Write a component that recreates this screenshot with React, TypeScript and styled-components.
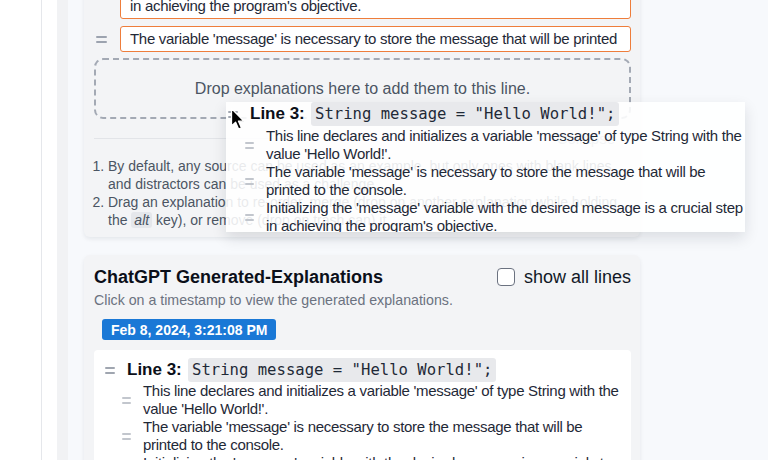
import * as React from 'react';
import styled, { createGlobalStyle } from 'styled-components';

const GlobalStyle = createGlobalStyle`
    html, body {
        margin: 0;
        padding: 0;
    }
    body {
        font-family: "Liberation Sans", Arial, sans-serif;
        color: #111827;
        background: #ffffff;
    }
`;

const Page = styled.div`
    display: flex;
    height: 460px;
    overflow: hidden;
    background: #ffffff;
`;

const Sidebar = styled.div`
    width: 41px;
    flex-shrink: 0;
    border-right: 1px solid #e5e7eb;
`;

const Gutter = styled.div`
    width: 15px;
    flex-shrink: 0;
`;

const Strip = styled.div`
    width: 11px;
    flex-shrink: 0;
    background: #f1f2f4;
`;

const Main = styled.div`
    position: relative;
    flex: 1;
    background: #f7f9fc;
    padding: 0 16px;
`;

const Column = styled.div<{ $offset: number }>`
    width: 556px;
    display: flex;
    flex-direction: column;
    gap: 18px;
    margin-top: ${p => -p.$offset}px;
`;

const Card = styled.section`
    background: #f3f4f6;
    border-radius: 6px;
    box-shadow: 0 2px 4px rgba(15, 23, 42, 0.08);
    padding: 10px 9px 8px 10px;
`;

const ExplRow = styled.div`
    display: flex;
    align-items: center;
    margin-bottom: 7px;
`;

const HandleBox = styled.span<{ $w: number; $color: string }>`
    display: inline-flex;
    flex-direction: column;
    justify-content: center;
    gap: 3px;
    width: ${p => p.$w}px;
    flex-shrink: 0;
    & > i {
        display: block;
        height: 2px;
        background: ${p => p.$color};
        border-radius: 1px;
    }
`;

const HandleSlot = styled.div<{ $w: number }>`
    width: ${p => p.$w}px;
    flex-shrink: 0;
    display: flex;
    padding-left: 2px;
    box-sizing: border-box;
`;

const Spacer = styled.span<{ $w: number }>`
    width: ${p => p.$w}px;
    flex-shrink: 0;
`;

const OrangeBox = styled.div`
    flex: 1;
    border: 1.5px solid #ee7d3b;
    border-radius: 3px;
    background: #ffffff;
    padding: 3px 9px;
    font-size: 15px;
    letter-spacing: -0.3px;
    line-height: 18px;
    color: #1f2937;
`;

const DropZone = styled.div`
    height: 61px;
    border: 2px dashed #a3a9b4;
    border-radius: 9px;
    display: flex;
    align-items: center;
    justify-content: center;
    font-size: 16px;
    color: #4b5563;
    box-sizing: border-box;
    margin-top: -1px;
`;

const DividerRow = styled.div`
    display: flex;
    align-items: center;
    gap: 12px;
    margin-top: 17px;
    height: 4px;
`;

const Rule = styled.div`
    flex: 1;
    height: 1px;
    background: #e2e4e8;
`;

const Collapse = styled.span`
    font-size: 15px;
    color: #9ca3af;
    padding-right: 16px;
`;

const Notes = styled.ol`
    margin: 17px 0 0 0;
    padding-left: 14px;
    font-size: 14px;
    line-height: 18px;
    color: #4b5563;
`;

const Kbd = styled.span`
    font-style: italic;
    background: #e5e7eb;
    border-radius: 3px;
    padding: 0 3px;
`;

const TitleRow = styled.div`
    display: flex;
    align-items: center;
    justify-content: space-between;
    padding-top: 1px;
`;

const Title = styled.h2`
    margin: 0;
    font-size: 18px;
    line-height: 22px;
    font-weight: 700;
    color: #0b0f19;
`;

const CheckLabel = styled.label`
    display: flex;
    align-items: center;
    gap: 9px;
    font-size: 18px;
    color: #111827;
`;

const Box = styled.span`
    width: 18px;
    height: 18px;
    box-sizing: border-box;
    border: 1.5px solid #6b7280;
    border-radius: 4px;
    background: #ffffff;
`;

const Subtitle = styled.p`
    margin: 4px 0 0 0;
    font-size: 14.2px;
    line-height: 16px;
    color: #6b7280;
`;

const Stamps = styled.div`
    display: flex;
    padding-left: 8px;
    margin-top: 11px;
`;

const Stamp = styled.button`
    border: 0;
    border-radius: 3px;
    background: #1a78d6;
    color: #ffffff;
    font-family: inherit;
    font-weight: 700;
    font-size: 14px;
    height: 21px;
    padding: 0 9px;
`;

const Panel = styled.div`
    margin-top: 10px;
    background: #ffffff;
    border-radius: 4px;
    padding: 8px 10px 10px 9px;
`;

const Block = styled.div<{ $ghost?: boolean }>`
    display: flex;
    flex-direction: column;
    gap: ${p => (p.$ghost ? 1 : 0)}px;
`;

const BlockHead = styled.div`
    display: flex;
    align-items: center;
    height: 24px;
`;

const LineLabel = styled.span`
    font-size: 17px;
    font-weight: 700;
    color: #0b0f19;
    width: 61px;
    flex-shrink: 0;
`;

const Code = styled.code`
    font-family: "DejaVu Sans Mono", "Liberation Mono", monospace;
    font-size: 15.6px;
    line-height: 24px;
    background: #e8e9ec;
    border-radius: 3px;
    padding: 0 4px;
    color: #1f2937;
`;

const ExplList = styled.div`
    display: flex;
    flex-direction: column;
`;

const ExplItem = styled.div`
    display: flex;
    align-items: center;
`;

const ExplText = styled.div`
    width: 480px;
    font-size: 15px;
    letter-spacing: -0.3px;
    line-height: 18px;
    color: #1f2937;
`;

const Ghost = styled.div`
    position: absolute;
    left: 158px;
    top: 102px;
    width: 519px;
    height: 130px;
    background: rgba(255, 255, 255, 0.88);
    box-shadow: 0 6px 14px rgba(15, 23, 42, 0.12);
    overflow: hidden;
`;

const Pointer = styled.svg`
    position: absolute;
    left: 162px;
    top: 107px;
`;

const Handle: React.FC<{ w?: number; color?: string }> = ({ w = 10, color = '#9ca3af' }) => (
    <HandleBox $w={w} $color={color}>
        <i />
        <i />
    </HandleBox>
);

const explanations = [
    "This line declares and initializes a variable 'message' of type String with the value 'Hello World!'.",
    "The variable 'message' is necessary to store the message that will be printed to the console.",
    "Initializing the 'message' variable with the desired message is a crucial step in achieving the program's objective."
];

const LineBlock: React.FC<{ ghost?: boolean }> = ({ ghost }) => (
    <Block $ghost={ghost}>
        <BlockHead>
            <HandleSlot $w={24}>
                <Handle w={10} color="#a0a6b0" />
            </HandleSlot>
            <LineLabel>Line 3:</LineLabel>
            <Code>String message = "Hello World!";</Code>
        </BlockHead>
        <ExplList>
            {explanations.map((text, i) => (
                <ExplItem key={i}>
                    <HandleSlot $w={40}>
                        <Spacer $w={17} />
                        <Handle w={9} color="#c2c6cd" />
                    </HandleSlot>
                    <ExplText>{text}</ExplText>
                </ExplItem>
            ))}
        </ExplList>
    </Block>
);

export default function App() {
    return (
        <>
            <GlobalStyle />
            <Page>
                <Sidebar />
                <Gutter />
                <Strip />
                <Main>
                    <Column $offset={35}>
                        <Card>
                            <ExplRow>
                                <HandleSlot $w={26} />
                                <OrangeBox>
                                    Initializing the 'message' variable with the desired message is a crucial step in achieving the program's objective.
                                </OrangeBox>
                            </ExplRow>
                            <ExplRow>
                                <HandleSlot $w={26}>
                                    <Handle w={11} />
                                </HandleSlot>
                                <OrangeBox>
                                    The variable 'message' is necessary to store the message that will be printed
                                </OrangeBox>
                            </ExplRow>
                            <DropZone>Drop explanations here to add them to this line.</DropZone>
                            <DividerRow>
                                <Rule />
                                <Collapse>Collapse</Collapse>
                            </DividerRow>
                            <Notes>
                                <li>By default, any source can be used as an example, but only ones with blank lines and distractors can be used as a challenge.</li>
                                <li>Drag an explanation to re-order, merge (drop on another explanation while holding the <Kbd>alt</Kbd> key), or remove (drop on trash can) it.</li>
                            </Notes>
                        </Card>
                        <Card>
                            <TitleRow>
                                <Title>ChatGPT Generated-Explanations</Title>
                                <CheckLabel>
                                    <Box />
                                    show all lines
                                </CheckLabel>
                            </TitleRow>
                            <Subtitle>Click on a timestamp to view the generated explanations.</Subtitle>
                            <Stamps>
                                <Stamp>Feb 8, 2024, 3:21:08 PM</Stamp>
                            </Stamps>
                            <Panel>
                                <LineBlock />
                            </Panel>
                        </Card>
                    </Column>
                    <Ghost>
                        <LineBlock ghost />
                    </Ghost>
                    <Pointer width="16" height="24" viewBox="0 0 16 24">
                        <path d="M1.5 1.5 L1.5 19 L5.6 15.2 L8.6 22 L11.4 20.8 L8.5 14.2 L14 14.2 Z" fill="#000" stroke="#fff" strokeWidth="1.3" strokeLinejoin="round" />
                    </Pointer>
                </Main>
            </Page>
        </>
    );
}
